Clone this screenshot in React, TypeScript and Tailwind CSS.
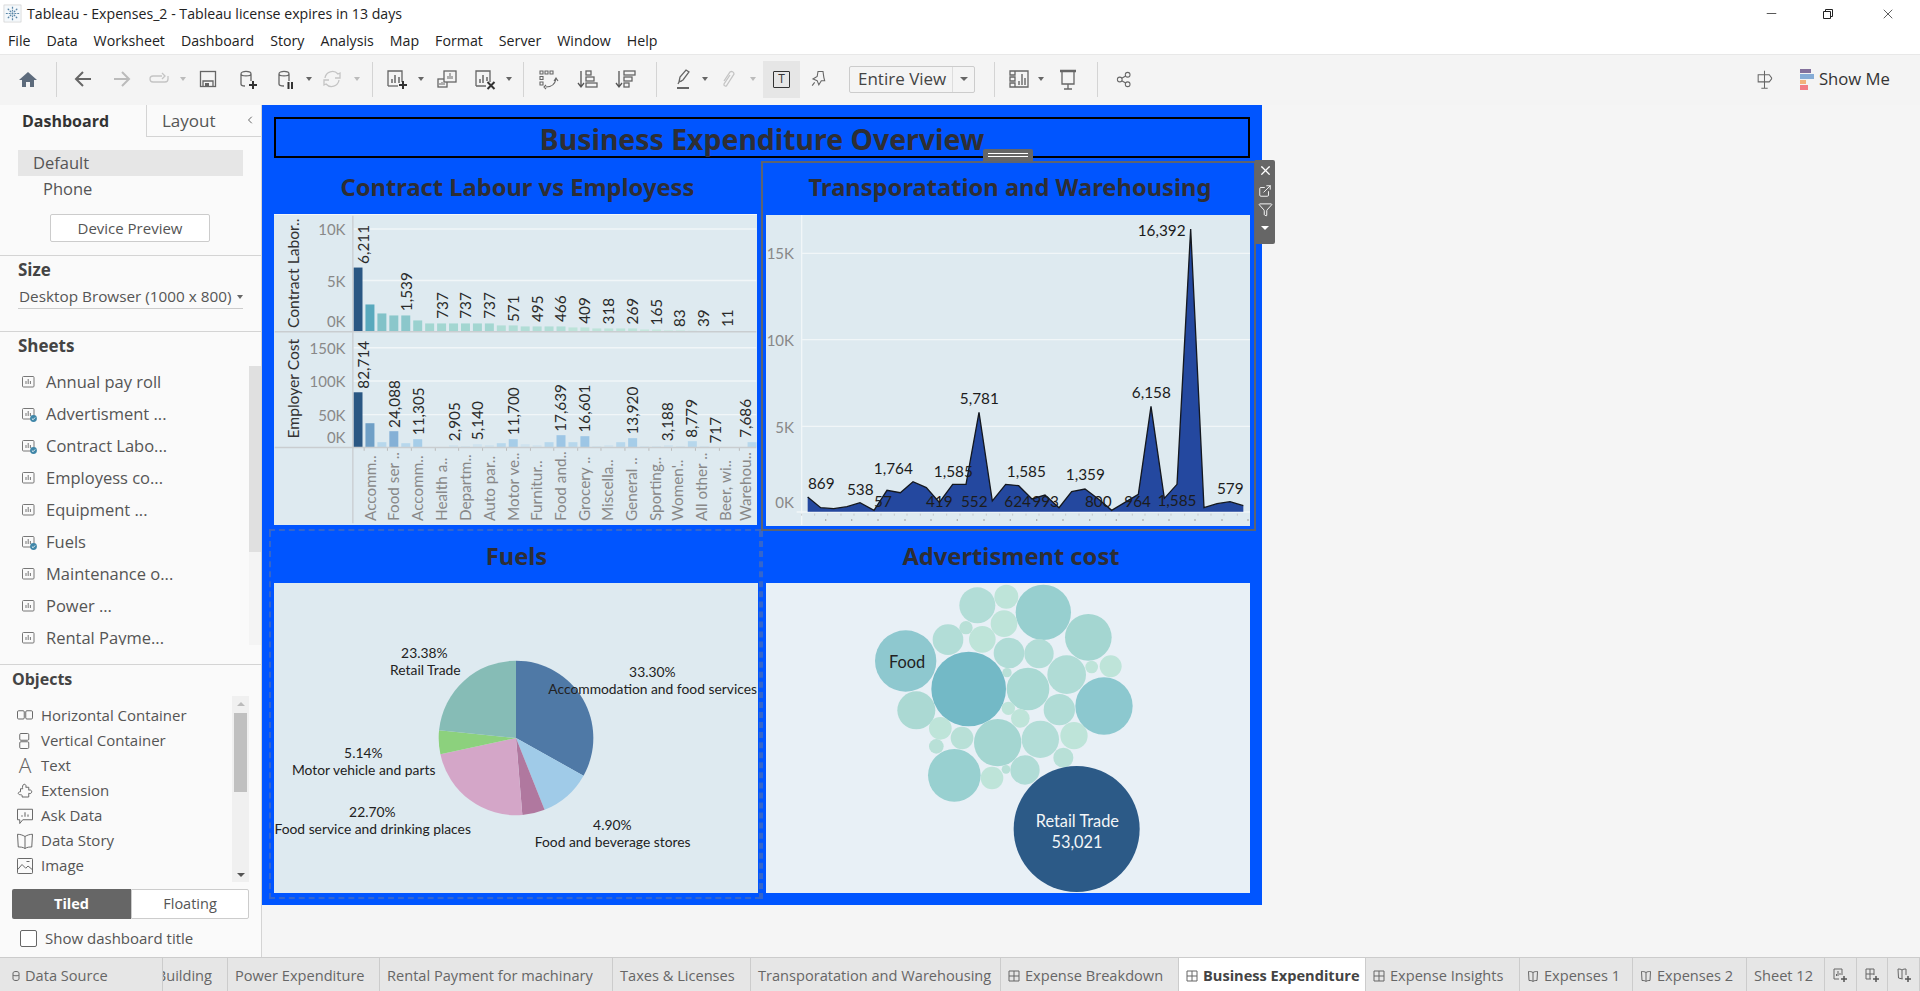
import React from 'react';
import { X, Minus, Filter, ExternalLink, ChevronLeft } from 'lucide-react';

const S = { fill: 'none', stroke: '#666', strokeWidth: 1.3 };

const Ico: React.FC<{ children: React.ReactNode; className?: string }> = ({ children, className }) => (
  <svg viewBox="0 0 24 24" className={className ?? 'w-6 h-6'}>{children}</svg>
);

const Sep: React.FC<{ ml: string }> = ({ ml }) => <div className={`${ml} w-px h-[35px] bg-[#d4d4d4] shrink-0`} />;

const Caret: React.FC<{ ml: string; light?: boolean }> = ({ ml, light }) => (
  <div className={`${ml} w-[10px] flex justify-center shrink-0`}>
    <div className={`w-0 h-0 border-l-[3px] border-r-[3px] border-t-[4px] border-l-transparent border-r-transparent ${light ? 'border-t-[#bbb]' : 'border-t-[#666]'}`} />
  </div>
);

const Tool: React.FC<{ ml: string; children: React.ReactNode }> = ({ ml, children }) => (
  <div className={`${ml} w-6 h-6 shrink-0 flex items-center justify-center`}>{children}</div>
);

const SheetIcon = ({ check }: { check?: boolean }) => (
  <svg viewBox="0 0 16 16" className="w-4 h-4 shrink-0">
    <rect x="1.5" y="2.5" width="11.5" height="10.5" rx="1" fill="none" stroke="#777" strokeWidth="1" />
    <path d="M5 10V7M7.2 10V5M9.4 10V7" stroke="#777" strokeWidth="1" />
    {check && <circle cx="12.5" cy="12.5" r="3.4" fill="#3f86a8" />}
    {check && <path d="M10.9 12.6l1.2 1.1 2-2.2" fill="none" stroke="#fff" strokeWidth="0.9" />}
  </svg>
);

const sheets: [string, boolean][] = [
  ['Annual pay roll', false],
  ['Advertisment ...', true],
  ['Contract Labo...', true],
  ['Employess co...', false],
  ['Equipment ...', false],
  ['Fuels', true],
  ['Maintenance o...', false],
  ['Power ...', false],
  ['Rental Payme...', false],
];

const objIcon = (name: string) => {
  switch (name) {
    case 'Horizontal Container':
      return <><rect x="2" y="5" width="9" height="11" rx="1.5" {...S} /><rect x="13" y="5" width="9" height="11" rx="1.5" {...S} /></>;
    case 'Vertical Container':
      return <><rect x="5" y="2" width="12" height="9" rx="1.5" {...S} /><rect x="5" y="13" width="12" height="9" rx="1.5" {...S} /></>;
    case 'Extension':
      return <path d="M11 3c2 0 3 2 2 4h4v4c2-1 4 0 4 2s-2 3-4 2v5H8c1-2 0-3-2-3s-3-1-3-2 1-2 3-2v-4h3C8 7 9 3 11 3z" {...S} />;
    case 'Ask Data':
      return <><path d="M2 3h20v14H9l-4 5v-5H2z" {...S} /><path d="M8 13v-2M12 13V7M16 13v-3" fill="none" stroke="#666" strokeWidth="1.4" /></>;
    case 'Data Story':
      return <path d="M12 6C9 4 5 3 2 3l1 17c3 0 6 0 9 2 3-2 6-2 9-2l1-17c-3 0-7 1-10 3zM12 6v16" {...S} />;
    default:
      return <><rect x="2" y="2" width="20" height="20" rx="1" {...S} /><path d="M2 17l6-7 5 5 3-3 6 5M14 6h4" {...S} /></>;
  }
};

const objects = ['Horizontal Container', 'Vertical Container', 'Text', 'Extension', 'Ask Data', 'Data Story', 'Image'];

const Sidebar = () => (
  <div className="w-[262px] shrink-0 border-r border-[#d4d4d4] bg-[#fafafa] flex flex-col text-[#555]">
    <div className="h-[32px] flex shrink-0">
      <div className="w-[147px] flex items-center pl-[22px] text-[16px] font-bold text-[#333] border-r border-[#d4d4d4]">Dashboard</div>
      <div className="flex-1 flex items-center pl-[15px] text-[17px] border-b border-[#d4d4d4] relative">
        Layout
        <ChevronLeft size={12} className="absolute right-[5px] top-[9px] text-[#666]" />
      </div>
    </div>
    <div className="h-[119px] border-b border-[#d4d4d4] shrink-0 pt-[13px]">
      <div className="mx-[18px] h-[26px] bg-[#e6e6e6] pl-[15px] flex items-center text-[16.5px]">Default</div>
      <div className="h-[26px] pl-[43px] flex items-center text-[16.5px]">Phone</div>
      <div className="mt-[12px] ml-[50px] w-[160px] h-[28px] border border-[#ccc] rounded-[2px] bg-white flex items-center justify-center text-[15px]">Device Preview</div>
    </div>
    <div className="h-[76px] border-b border-[#d4d4d4] shrink-0 pt-[4px] px-[18px]">
      <div className="h-5 flex items-center text-[17px] font-bold text-[#444]">Size</div>
      <div className="mt-[5px] h-[24px] border-b border-[#ccc] flex items-center justify-between text-[15.3px] pl-px whitespace-nowrap">
        <span>Desktop Browser (1000 x 800)</span>
        <div className="w-0 h-0 border-l-[3px] border-r-[3px] border-t-[4px] border-l-transparent border-r-transparent border-t-[#666] shrink-0" />
      </div>
    </div>
    <div className="h-[333px] border-b border-[#d4d4d4] shrink-0 pt-[4px]">
      <div className="h-5 pl-[18px] flex items-center text-[17px] font-bold text-[#444]">Sheets</div>
      <div className="mt-[10px] h-[279px] flex">
        <div className="flex-1 overflow-hidden">
          {sheets.map(([name, check]) => (
            <div key={name} className="h-[32px] pl-[21px] flex items-center gap-[9px] text-[16.5px]">
              <SheetIcon check={check} />
              <span className="whitespace-nowrap">{name}</span>
            </div>
          ))}
        </div>
        <div className="w-[12px] bg-[#f4f4f4] shrink-0">
          <div className="h-[186px] bg-[#e0e0e0]" />
        </div>
      </div>
    </div>
    <div className="flex-1 pt-[4px] relative">
      <div className="h-5 pl-[12px] flex items-center text-[16px] font-bold text-[#444]">Objects</div>
      <div className="mt-[7px] h-[186px] flex pl-[16px] pr-[12px]">
        <div className="flex-1 pt-[7px]">
          {objects.map((o) => (
            <div key={o} className="h-[25px] flex items-center text-[15px] whitespace-nowrap">
              {o === 'Text' ? (
                <span className="w-[18px] text-center text-[21px] font-light leading-none text-[#666]">A</span>
              ) : (
                <Ico className="w-[18px] h-[18px] shrink-0">{objIcon(o)}</Ico>
              )}
              <span className="ml-[7px]">{o}</span>
            </div>
          ))}
        </div>
        <div className="w-[17px] bg-[#f0f0f0] shrink-0 flex flex-col items-center pt-[6px]">
          <div className="w-0 h-0 border-l-[4px] border-r-[4px] border-b-[4px] border-l-transparent border-r-transparent border-b-[#bbb]" />
          <div className="mt-[7px] w-[13px] h-[79px] bg-[#c0c0c0]" />
          <div className="mt-[81px] w-0 h-0 border-l-[4px] border-r-[4px] border-t-[4px] border-l-transparent border-r-transparent border-t-[#555]" />
        </div>
      </div>
      <div className="mt-[7px] ml-[12px] w-[237px] h-[30px] flex text-[14.5px]">
        <div className="w-[119px] bg-[#666] text-white font-bold flex items-center justify-center rounded-l-[2px]">Tiled</div>
        <div className="flex-1 bg-white border border-[#ccc] flex items-center justify-center rounded-r-[2px]">Floating</div>
      </div>
      <div className="mt-[11px] ml-[20px] h-[17px] flex items-center gap-[8px] text-[15px]">
        <div className="w-[17px] h-[17px] border border-[#666] rounded-[2px] bg-white" />
        <span>Show dashboard title</span>
      </div>
    </div>
  </div>
);

const upperTops = [486, 597, 624, 630, 630, 645, 654, 654, 654, 654, 654, 654, 660, 660, 663, 663, 663, 663, 666, 666, 669, 669, 669, 669, 672, 672, 675, 675, 676];
const upperCol = (i: number) =>
  i === 0 ? '#2a5783' : i === 1 ? '#59a9bd' : i === 2 ? '#82c2c8' : i < 5 ? '#8bc7cb' : i === 5 ? '#9ad1cf' : i < 12 ? '#a3d6d1' : i < 18 ? '#b1ddd6' : i < 24 ? '#bde3d9' : '#c5e7dd';
const lowerTops = [861, 954, 1011, 978, 1014, 1002, 0, 0, 1020, 1023, 1017, 1020, 1014, 1002, 1017, 1020, 1011, 990, 1011, 993, 1023, 1020, 1011, 999, 1023, 1023, 1020, 1023, 1008, 1023, 0, 0, 0, 1011];
const lowerCol = (h: number) =>
  h > 100 ? '#2a5783' : h > 60 ? '#6f9fc6' : h > 40 ? '#84b0d6' : h > 30 ? '#9dc6e5' : h > 20 ? '#a6cde8' : h > 10 ? '#b7d7ec' : '#cfe3ef';

const upperLabels: [string, number, number][] = [
  ['6,211', 293, 475], ['1,539', 422, 617], ['737', 530, 640], ['737', 600, 640], ['737', 672, 640], ['571', 744, 650],
  ['495', 816, 650], ['466', 886, 650], ['409', 956, 655], ['318', 1028, 657], ['269', 1100, 657], ['165', 1172, 660],
  ['83', 1242, 665], ['39', 1314, 665], ['11', 1386, 665],
];
const lowerLabels: [string, number, number][] = [
  ['82,714', 293, 850], ['24,088', 386, 968], ['11,305', 458, 990], ['2,905', 566, 1008], ['5,140', 636, 1005], ['11,700', 744, 990],
  ['17,639', 884, 980], ['16,601', 958, 982], ['13,920', 1100, 988], ['3,188', 1206, 1008], ['8,779', 1278, 998], ['717', 1350, 1015], ['7,686', 1440, 998],
];
const catLabels: [string, number][] = [
  ['Accomm..', 314], ['Food ser ..', 384], ['Accomm..', 456], ['Health a..', 528], ['Departm..', 598], ['Auto par..', 670],
  ['Motor ve..', 742], ['Furnitur..', 814], ['Food and..', 884], ['Grocery ..', 956], ['Miscella..', 1026], ['General ..', 1098],
  ['Sporting..', 1170], ["Women'..", 1238], ['All other ..', 1310], ['Beer, wi..', 1382], ['Warehou..', 1442],
];

const Vert: React.FC<{ x: number; y: number; size?: number; fill: string; children: string }> = ({ x, y, size = 46, fill, children }) => (
  <text transform={`translate(${x} ${y}) rotate(-90)`} fontSize={size} fill={fill} dominantBaseline="central">{children}</text>
);

const LabourChart = () => (
  <svg viewBox="27 328 1448 932" className="w-full h-full block [font-family:Lato,sans-serif]">
    {[370, 525, 727, 827, 928].map((y) => <line key={y} x1="264" x2="1475" y1={y} y2={y} stroke="#f1f6f8" strokeWidth="4" />)}
    {upperTops.map((t, i) => <rect key={i} x={264 + 35.9 * i} y={t} width="27" height={678 - t} fill={upperCol(i)} />)}
    {lowerTops.map((t, i) => (t ? <rect key={i} x={264 + 35.9 * i} y={t} width="27" height={1026 - t} fill={lowerCol(1026 - t)} /> : null))}
    <line x1="27" x2="1475" y1="679" y2="679" stroke="#c9cdd0" strokeWidth="4" />
    <line x1="27" x2="1475" y1="1027" y2="1027" stroke="#c9cdd0" strokeWidth="4" />
    <line x1="262" x2="262" y1="330" y2="1255" stroke="#c9cdd0" strokeWidth="4" />
    {[['10K', 371], ['5K', 527], ['0K', 648], ['150K', 728], ['100K', 827], ['50K', 930], ['0K', 996]].map(([t, y], i) => (
      <text key={i} x="240" y={y} textAnchor="end" dominantBaseline="central" fontSize="45" fill="#888">{t}</text>
    ))}
    <Vert x={82} y={668} fill="#333" size={47}>Contract Labor..</Vert>
    <Vert x={82} y={1000} fill="#333" size={47}>Employer Cost</Vert>
    {upperLabels.map(([t, x, y], i) => <Vert key={i} x={x} y={y} fill="#2a2a2a">{t}</Vert>)}
    {lowerLabels.map(([t, x, y], i) => <Vert key={i} x={x} y={y} fill="#2a2a2a">{t}</Vert>)}
    {catLabels.map(([t, x], i) => <Vert key={i} x={x} y={1248} fill="#888" size={46}>{t}</Vert>)}
    {catLabels.map(([, x], i) => <line key={i} x1={x - 18} x2={x - 18} y1="1029" y2="1037" stroke="#bbb" strokeWidth="3" />)}
  </svg>
);

const areaPts = [[158, 1176], [197, 1208], [236, 1211], [276, 1205], [315, 1193], [357, 1216], [396, 1156], [436, 1163], [474, 1130], [514, 1148], [553, 1192], [593, 1138], [633, 1138], [672, 922], [712, 1188], [752, 1138], [791, 1142], [831, 1182], [870, 1170], [912, 1208], [950, 1160], [990, 1152], [1030, 1182], [1070, 1216], [1110, 1192], [1150, 1168], [1188, 904], [1228, 1180], [1266, 1138], [1307, 372], [1347, 1208], [1386, 1196], [1425, 1190], [1465, 1202]];
const areaLabels: [string, number, number][] = [
  ['16,392', 1220, 375], ['5,781', 673, 878], ['6,158', 1189, 860], ['869', 199, 1133], ['538', 316, 1152], ['57', 384, 1188],
  ['1,764', 415, 1088], ['419', 553, 1188], ['1,585', 595, 1098], ['552', 658, 1188], ['1,585', 814, 1097], ['624', 788, 1188],
  ['993', 872, 1188], ['1,359', 991, 1108], ['800', 1030, 1188], ['964', 1148, 1188], ['1,585', 1266, 1185], ['579', 1426, 1148],
];

const TransportChart = () => (
  <svg viewBox="33 330 1452 933" className="w-full h-full block [font-family:Lato,sans-serif]">
    {[445, 704, 964].map((y) => <line key={y} x1="140" x2="1485" y1={y} y2={y} stroke="#f1f6f8" strokeWidth="4" />)}
    <line x1="140" x2="140" y1="330" y2="1260" stroke="#f1f6f8" strokeWidth="4" />
    <line x1="125" x2="1485" y1="1221" y2="1221" stroke="#f1f6f8" strokeWidth="4" />
    <polygon points={`${areaPts.map((p) => p.join(',')).join(' ')} 1465,1220 158,1220`} fill="#24489f" />
    <polyline points={areaPts.map((p) => p.join(',')).join(' ')} fill="none" stroke="#14181f" strokeWidth="4" />
    {[['15K', 445], ['10K', 705], ['5K', 965], ['0K', 1190]].map(([t, y], i) => (
      <text key={i} x="117" y={y} textAnchor="end" dominantBaseline="central" fontSize="45" fill="#888">{t}</text>
    ))}
    {areaLabels.map(([t, x, y], i) => (
      <text key={i} x={x} y={y} textAnchor="middle" dominantBaseline="central" fontSize="46" fill="#1c1c1c">{t}</text>
    ))}
    {areaPts.map(([x], i) => <line key={i} x1={x - 18} x2={x - 18} y1="1226" y2="1232" stroke="#c5c9cc" strokeWidth="3" />)}
    {areaPts.filter((_, i) => i % 2 === 0).map(([x], i) => <rect key={i} x={x + 52} y="1243" width="4" height="4" fill="#999" />)}
  </svg>
);

const polar = (deg: number) => {
  const a = (deg * Math.PI) / 180;
  return `${753 + 232 * Math.sin(a)} ${624 - 232 * Math.cos(a)}`;
};
const slices: [number, number, string][] = [
  [0, 119.2, '#4f79a6'], [119.2, 158.3, '#a0cbe8'], [158.3, 175.3, '#b0789f'], [175.3, 257.8, '#d4a6c8'], [257.8, 275.7, '#8cd17d'], [275.7, 360, '#86bcb6'],
];
const pieLabels: [string, string, number, number, number][] = [
  ['23.38%', 'Retail Trade', 478, 481, 368],
  ['33.30%', 'Accommodation and food services', 1162, 1163, 425],
  ['5.14%', 'Motor vehicle and parts', 295, 296, 668],
  ['22.70%', 'Food service and drinking places', 322, 323, 845],
  ['4.90%', 'Food and beverage stores', 1042, 1043, 884],
];

const FuelsChart = () => (
  <svg viewBox="27 159 1452 930" className="w-full h-full block [font-family:Lato,sans-serif]">
    {slices.map(([a, b, c]) => (
      <path key={c} d={`M753 624L${polar(a)}A232 232 0 ${b - a > 180 ? 1 : 0} 1 ${polar(b)}Z`} fill={c} />
    ))}
    {pieLabels.map(([p, n, x1, x2, y]) => (
      <g key={n} textAnchor="middle" dominantBaseline="central" fontSize="41.5" fill="#222">
        <text x={x1} y={y}>{p}</text>
        <text x={x2} y={y + 51}>{n}</text>
      </g>
    ))}
  </svg>
);

const bubbles: [number, number, number, string][] = [
  [626, 477, 112, '#73b9c6'], [437, 393, 92, '#8ec8cf'], [1032, 528, 86, '#8cc8cf'], [850, 247, 83, '#97cfcf'], [583, 736, 79, '#98d0d0'],
  [985, 322, 70, '#a4d6d1'], [713, 638, 71, '#a4d6d1'], [804, 477, 64, '#a9d9d3'], [920, 434, 58, '#b0dcd6'], [652, 226, 54, '#b2ddd7'],
  [841, 628, 56, '#b2ddd7'], [469, 541, 57, '#abd9d3'], [898, 539, 47, '#b0dcd6'], [837, 371, 44, '#b2ddd7'], [747, 369, 46, '#b0dcd6'],
  [795, 720, 44, '#b0dcd6'], [564, 329, 46, '#b2ddd7'], [732, 281, 40, '#bee4d9'], [667, 328, 40, '#bee4d9'], [942, 617, 41, '#bee4d9'],
  [739, 200, 36, '#bee4d9'], [541, 595, 34, '#bee4d9'], [606, 624, 34, '#b8e0d7'], [696, 744, 34, '#bee4d9'], [1052, 409, 33, '#bee4d9'],
  [910, 683, 30, '#b8e0d7'], [781, 565, 28, '#bee4d9'], [529, 649, 22, '#b8e0d7'], [618, 293, 20, '#b8e0d7'], [995, 411, 19, '#bee4d9'],
  [745, 535, 20, '#bee4d9'], [741, 428, 14, '#b8e0d7'], [738, 718, 13, '#b8e0d7'], [950, 897, 189, '#2c5a87'],
];

const BubbleChart = () => (
  <svg viewBox="18 159 1452 930" className="w-full h-full block [font-family:Lato,sans-serif]">
    {bubbles.map(([x, y, r, c], i) => <circle key={i} cx={x} cy={y} r={r} fill={c} />)}
    <g textAnchor="middle" dominantBaseline="central" fontSize="49">
      <text x="441" y="395" fill="#222">Food</text>
      <text x="952" y="872" fill="#f3f6f8">Retail Trade</text>
      <text x="951" y="935" fill="#f3f6f8">53,021</text>
    </g>
  </svg>
);

const ZoneTitle: React.FC<{ h: string; children: React.ReactNode }> = ({ h, children }) => (
  <div className={`${h} flex items-center justify-center text-[23.7px] font-bold text-[#2e2e34] [font-family:'Noto_Sans',sans-serif] whitespace-nowrap`}>{children}</div>
);

const Dashboard = () => (
  <div className="w-[1000px] h-[800px] bg-[#0055ff] shrink-0 pt-[12px]">
    <div className="ml-[12px] w-[976px] h-[41px] pt-[3px] border-2 border-black flex items-center justify-center text-[28.4px] font-bold text-[#2e2e34] [font-family:'Noto_Sans',sans-serif] whitespace-nowrap">
      Business Expenditure Overview
    </div>
    <div className="mt-[3px] ml-[7px] grid grid-cols-[492px_495px] grid-rows-[370px_368px]">
      <div className="pl-[5px] border-b-2 border-dashed border-[#3566cc]">
        <div className="h-[2px]" />
        <ZoneTitle h="h-[51px] pb-[2px]">Contract Labour vs Employess</ZoneTitle>
        <div className="w-[483px] h-[311px] bg-[#deeaf0] border-t border-[#f2f6f8]"><LabourChart /></div>
      </div>
      <div className="relative border-2 border-[#5e6470] pl-[3px]">
        <ZoneTitle h="h-[52px] pb-[2px]">Transporatation and Warehousing</ZoneTitle>
        <div className="w-[484px] h-[311px] bg-[#deeaf0]"><TransportChart /></div>
        <div className="absolute left-[220px] -top-[14px] w-[50px] h-[12px] bg-[#666] rounded-t-[2px] flex flex-col items-center justify-center gap-[2px]">
          <div className="w-[40px] h-px bg-white" />
          <div className="w-[40px] h-px bg-white" />
        </div>
        <div className="absolute left-[492px] -top-[3px] w-[20px] h-[84px] bg-[#666] rounded-r-[2px] flex flex-col items-center text-white pt-[3px]">
          <X size={15} strokeWidth={2} />
          <ExternalLink size={14} strokeWidth={1.5} className="mt-[6px]" />
          <Filter size={15} strokeWidth={1.5} className="mt-[4px]" />
          <div className="mt-[9px] w-0 h-0 border-l-[4px] border-r-[4px] border-t-[4px] border-l-transparent border-r-transparent border-t-white" />
        </div>
      </div>
      <div className="pl-[3px] border-2 border-t-0 border-dashed border-[#3566cc]">
        <ZoneTitle h="h-[52px]">Fuels</ZoneTitle>
        <div className="w-[484px] h-[310px] bg-[#deeaf0]"><FuelsChart /></div>
      </div>
      <div className="pl-[3px] border-l-2 border-dashed border-[#3566cc]">
        <ZoneTitle h="h-[52px]">Advertisment cost</ZoneTitle>
        <div className="w-[484px] h-[310px] bg-[#e8f0f6]"><BubbleChart /></div>
      </div>
    </div>
  </div>
);

const Toolbar = () => (
  <div className="h-[51px] bg-[#f4f4f4] border-t border-[#e8e8e8] flex items-center shrink-0 pb-[2px]">
    <Tool ml="ml-[16px]"><Ico><path d="M12 5L3 13h3v7h4v-5h4v5h4v-7h3z" fill="#5d6b7c" /></Ico></Tool>
    <Sep ml="ml-[16px]" />
    <Tool ml="ml-[14px]"><Ico><path d="M20 12H5M12 5l-7 7 7 7" fill="none" stroke="#666" strokeWidth="2" /></Ico></Tool>
    <Tool ml="ml-[15px]"><Ico><path d="M4 12h15M12 5l7 7-7 7" fill="none" stroke="#bbb" strokeWidth="2" /></Ico></Tool>
    <Tool ml="ml-[13px]"><Ico><path d="M15 9H6a3 3 0 0 0 0 6h12a3 3 0 0 0 3-3V9M15 6l3 3-3 3" fill="none" stroke="#c4c4c4" strokeWidth="1.3" /></Ico></Tool>
    <Caret ml="ml-[7px]" light />
    <Tool ml="ml-[8px]"><Ico><rect x="4.5" y="4.5" width="15" height="15" fill="none" stroke="#666" strokeWidth="1.3" /><path d="M7 19v-5h10v5" fill="none" stroke="#666" strokeWidth="1.3" /><rect x="9" y="16" width="4" height="3" fill="#666" /></Ico></Tool>
    <Tool ml="ml-[15px]"><Ico><path d="M6 7c0-3.5 10-3.5 10 0v7M6 7c0 2.5 10 2.5 10 0M6 7v10c0 1 1 2 4 2" {...S} /><path d="M18 14v8M14 18h8" stroke="#333" strokeWidth="2" /></Ico></Tool>
    <Tool ml="ml-[14px]"><Ico><path d="M6 7c0-3.5 10-3.5 10 0v7M6 7c0 2.5 10 2.5 10 0M6 7v10c0 1 1 2 5 2" {...S} /><path d="M15.5 15v7M19 15v7" stroke="#333" strokeWidth="2" /></Ico></Tool>
    <Caret ml="ml-[7px]" />
    <Tool ml="ml-[6px]"><Ico><path d="M5 11a7.5 7.5 0 0 1 13-4l2-1v5h-5M19 13a7.5 7.5 0 0 1-13 4l-2 1v-5h5" fill="none" stroke="#c4c4c4" strokeWidth="1.3" /></Ico></Tool>
    <Caret ml="ml-[8px]" light />
    <Sep ml="ml-[10px]" />
    <Tool ml="ml-[12px]"><Ico><path d="M3 19V4h14v11" {...S} /><path d="M3 19h10" {...S} /><path d="M7 16v-4M10 16V8M14 16v-6" stroke="#666" strokeWidth="1.5" /><path d="M18 14v8M14 18h8" stroke="#333" strokeWidth="2" /></Ico></Tool>
    <Caret ml="ml-[7px]" />
    <Tool ml="ml-[9px]"><Ico><rect x="3" y="12" width="9" height="8" {...S} /><rect x="9" y="4" width="12" height="11" fill="#f4f4f4" stroke="#666" strokeWidth="1.3" /><path d="M13 12V9M15 12V6M17 12V9M5 18v-2M7 18v-3M9 18v-2" stroke="#666" strokeWidth="1" /></Ico></Tool>
    <Tool ml="ml-[14px]"><Ico><path d="M3 19V4h14v11M3 19h10" {...S} /><path d="M7 16v-4M10 16V8M14 14v-4" stroke="#666" strokeWidth="1.5" /><path d="M14.5 15l7 7M21.5 15l-7 7" stroke="#333" strokeWidth="2" /></Ico></Tool>
    <Caret ml="ml-[7px]" />
    <Sep ml="ml-[9px]" />
    <Tool ml="ml-[13px]"><Ico><path d="M3 4h3v3H3zM8 4h3v3H8zM13 4h3v3h-3zM3 9.5h3v3H3zM3 15h3v3H3zM9 20c5 0 9-3 10-8M17 14l2-3 2 3M9 18l-2 2 2 2" fill="none" stroke="#666" strokeWidth="1.1" /></Ico></Tool>
    <Tool ml="ml-[14px]"><Ico><path d="M6 4v15M3 16l3 4 3-4" fill="none" stroke="#555" strokeWidth="1.3" /><rect x="11" y="4" width="5" height="4" {...S} /><rect x="11" y="10" width="8" height="4" {...S} /><rect x="11" y="16" width="11" height="4" {...S} /></Ico></Tool>
    <Tool ml="ml-[14px]"><Ico><path d="M6 4v15M3 16l3 4 3-4" fill="none" stroke="#555" strokeWidth="1.3" /><rect x="11" y="4" width="11" height="4" {...S} /><rect x="11" y="10" width="8" height="4" {...S} /><rect x="11" y="16" width="5" height="4" {...S} /></Ico></Tool>
    <Sep ml="ml-[19px]" />
    <Tool ml="ml-[14px]"><Ico><path d="M8 15l1-5 6-7 3 2-6 8zM7 17l1-2 3-1" {...S} /><rect x="6" y="20" width="12" height="2" fill="#666" /></Ico></Tool>
    <Caret ml="ml-[5px]" />
    <Tool ml="ml-[6px]"><Ico><path d="M8 14l6-9a2.5 2.5 0 0 1 4 2l-7 11a1.5 1.5 0 0 1-3-1l6-9" fill="none" stroke="#c4c4c4" strokeWidth="1.3" /></Ico></Tool>
    <Caret ml="ml-[8px]" light />
    <div className="ml-[5px] w-[37px] h-[37px] bg-[#e6e6e6] flex items-center justify-center shrink-0">
      <div className="w-[17px] h-[17px] border border-[#333] rounded-[1px] flex items-center justify-center text-[12px] leading-none text-[#333]">T</div>
    </div>
    <Tool ml="ml-[6px]"><Ico className="w-[20px] h-[20px]"><path d="M12 3l-1 6-5 3 5 2 2 5 3-5 4 0-1-4-1-7zM8 16l-3 4" {...S} /></Ico></Tool>
    <div className="ml-[19px] w-[126px] h-[27px] border border-[#ccc] rounded-[2px] flex items-center shrink-0 text-[17px] text-[#444]">
      <span className="flex-1 pl-[8px] whitespace-nowrap">Entire View</span>
      <div className="w-[22px] h-full border-l border-[#ddd] flex items-center justify-center">
        <div className="w-0 h-0 border-l-[4px] border-r-[4px] border-t-[4px] border-l-transparent border-r-transparent border-t-[#666]" />
      </div>
    </div>
    <Sep ml="ml-[19px]" />
    <Tool ml="ml-[12px]"><Ico><path d="M3 4h5v4H3zM3 10h5v4H3zM3 16h5v4H3zM8 4h13v16H8" {...S} /><path d="M12 18v-4M15 18V7M18 18v-7" stroke="#666" strokeWidth="1.4" /></Ico></Tool>
    <Caret ml="ml-[5px]" />
    <Tool ml="ml-[10px]"><Ico><path d="M4 4h16" stroke="#666" strokeWidth="2.5" /><path d="M6 5v12h12V5M12 17v5M8 22h8" {...S} /></Ico></Tool>
    <Sep ml="ml-[17px]" />
    <Tool ml="ml-[14px]"><Ico className="w-[19px] h-[19px]"><circle cx="6" cy="12" r="3" {...S} /><circle cx="16" cy="6" r="3" {...S} /><circle cx="16" cy="18" r="3" {...S} /><path d="M8.5 10.5l5-3M8.5 13.5l5 3" {...S} /></Ico></Tool>
    <div className="flex-1" />
    <Tool ml="ml-0"><Ico className="w-[19px] h-[19px]"><path d="M12 1v22M8 23h8" {...S} /><path d="M4 6h14l3 4v1l-3 4H4z" fill="none" stroke="#666" strokeWidth="1.3" /></Ico></Tool>
    <div className="ml-[23px] w-[14px] h-[21px] flex flex-col gap-px shrink-0">
      <div className="h-[5px] w-[11px] bg-[#83719c]" />
      <div className="h-[5px] w-[14px] bg-[#86acd6]" />
      <div className="h-[5px] w-[6px] bg-[#f2b27c]" />
      <div className="h-[5px] w-[8px] bg-[#f27d86]" />
    </div>
    <span className="ml-[5px] mr-[30px] text-[16.7px] text-[#333] whitespace-nowrap">Show Me</span>
  </div>
);

const TabGrid = () => (
  <svg viewBox="0 0 12 12" className="w-3 h-3 shrink-0"><path d="M1 1h10v10H1zM6 1v10M1 6h10" fill="none" stroke="#666" strokeWidth="1" /></svg>
);
const TabStory = () => (
  <svg viewBox="0 0 12 12" className="w-3 h-3 shrink-0"><path d="M6 2.5C4.5 1.5 3 1.5 1.5 1.5L2 10.5c1.5 0 3 0 4 1 1-1 2.5-1 4-1l.5-9C9 1.5 7.5 1.5 6 2.5zM6 2.5v9" fill="none" stroke="#666" strokeWidth="1" /></svg>
);

const tabs: [string, string, 'grid' | 'story' | null, boolean?][] = [
  ['Power Expenditure', 'w-[152px]', null],
  ['Rental Payment for machinary', 'w-[233px]', null],
  ['Taxes & Licenses', 'w-[138px]', null],
  ['Transporatation and Warehousing', 'w-[250px]', null],
  ['Expense Breakdown', 'w-[178px]', 'grid'],
  ['Business Expenditure', 'w-[187px]', 'grid', true],
  ['Expense Insights', 'w-[154px]', 'grid'],
  ['Expenses 1', 'w-[113px]', 'story'],
  ['Expenses 2', 'w-[114px]', 'story'],
  ['Sheet 12', 'w-[78px]', null],
];

const TabBar = () => (
  <div className="h-[34px] shrink-0 border-t border-[#ccc] bg-[#e6e6e6] flex text-[14.6px] text-[#666] whitespace-nowrap">
    <div className="w-[163px] shrink-0 border-r border-[#ccc] pl-[10px] pt-[2px] flex items-center gap-[3px]">
      <svg viewBox="0 0 12 12" className="w-3 h-3 shrink-0"><path d="M3 3c0-2 6-2 6 0v6c0 2-6 2-6 0zM3 5c0 1 6 1 6 0" fill="none" stroke="#666" strokeWidth="1" /></svg>
      Data Source
    </div>
    <div className="w-[65px] shrink-0 border-r border-[#ccc] overflow-hidden pt-[2px] flex items-center justify-end pr-[15px]">
      <span className="shrink-0">Building</span>
    </div>
    {tabs.map(([name, w, icon, active]) => (
      <div key={name} className={`${w} shrink-0 border-r border-[#ccc] flex items-center pl-[7px] pt-[2px] gap-[5px] ${active ? 'bg-white font-bold text-[#444]' : ''}`}>
        {icon === 'grid' && <TabGrid />}
        {icon === 'story' && <TabStory />}
        <span>{name}</span>
      </div>
    ))}
    {[0, 1, 2].map((i) => (
      <div key={i} className="flex-1 border-r border-[#ccc] flex items-center justify-center">
        <svg viewBox="0 0 16 16" className="w-4 h-4">
          {i === 0 && <path d="M2 12V2h8v6M2 12h5M4.5 9V7M6 9V4M8 8V6" fill="none" stroke="#666" strokeWidth="1" />}
          {i === 1 && <path d="M2 12V2h8v6M2 12h5M6 2v10M2 7h8" fill="none" stroke="#666" strokeWidth="1" />}
          {i === 2 && <path d="M6 3C5 2 3 2 2 2l.5 9 4 1M6 3c1-1 3-1 4-1v6M6 3v9" fill="none" stroke="#666" strokeWidth="1" />}
          <path d="M12 9v6M9 12h6" stroke="#555" strokeWidth="1.5" />
        </svg>
      </div>
    ))}
  </div>
);

const App = () => (
  <div className="w-[1920px] h-[991px] overflow-hidden flex flex-col bg-white [font-family:'Open_Sans',sans-serif]">
    <div className="h-[27px] shrink-0 flex items-center pl-[3px] text-[14.15px] text-[#222] relative whitespace-nowrap">
      <svg viewBox="0 0 20 20" className="w-[19px] h-[19px] mr-[5px]">
        <rect x="1" y="1" width="18" height="18" fill="#f4f8fb" stroke="#bbb" strokeWidth="0.5" />
        <path d="M10 3v14M3 10h14M5 5l10 10M15 5L5 15" stroke="#5b87a8" strokeWidth="1.3" strokeDasharray="2 1" />
      </svg>
      Tableau - Expenses_2 - Tableau license expires in 13 days
      <Minus size={15} strokeWidth={1.2} className="absolute left-[1764px] top-[6px] text-[#222]" />
      <svg viewBox="0 0 12 12" className="absolute left-[1822px] top-[8px] w-3 h-3"><path d="M1.5 3.5h7v7h-7zM3.5 3.5v-2h7v7h-2" fill="none" stroke="#222" strokeWidth="1" /></svg>
      <X size={16} strokeWidth={1.1} className="absolute left-[1880px] top-[6px] text-[#222]" />
    </div>
    <div className="h-[27px] shrink-0 flex items-center pl-[8px] gap-[16px] text-[14.2px] text-[#222]">
      {['File', 'Data', 'Worksheet', 'Dashboard', 'Story', 'Analysis', 'Map', 'Format', 'Server', 'Window', 'Help'].map((m) => <span key={m}>{m}</span>)}
    </div>
    <Toolbar />
    <div className="flex-1 flex min-h-0 bg-[#f5f5f5]">
      <Sidebar />
      <Dashboard />
    </div>
    <TabBar />
  </div>
);

export default App;
